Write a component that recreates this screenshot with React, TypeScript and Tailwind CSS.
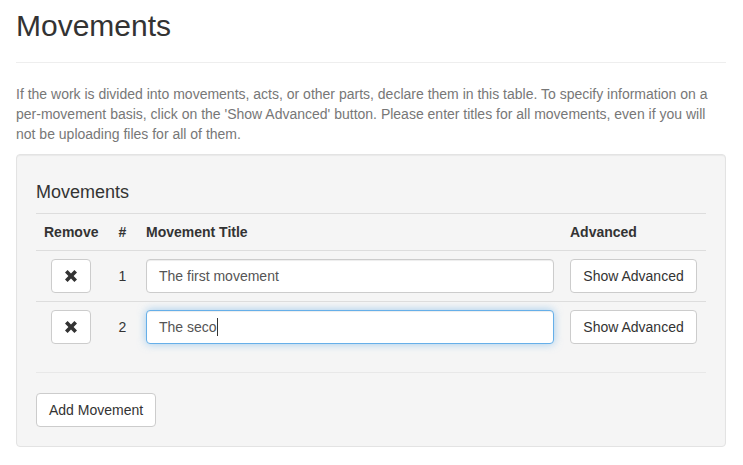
import React from 'react';

const RemoveIcon: React.FC = () => (
    <svg width="12" height="12" viewBox="0 0 12 12" className="block">
        <path d="M0 2.6 L2.6 0 L6 3.4 L9.4 0 L12 2.6 L8.6 6 L12 9.4 L9.4 12 L6 8.6 L2.6 12 L0 9.4 L3.4 6 Z" fill="#333" />
    </svg>
);

const movements = [
    { id: 1, title: 'The first movement', focused: false },
    { id: 2, title: 'The seco', focused: true },
];

const btn = 'h-[34px] bg-white border border-[#ccc] rounded-[4px] px-3 text-[14px] text-[#333] leading-5';

const App: React.FC = () => {
    return (
        <div className="min-h-screen bg-white pl-4 pr-[17px] text-[14px] leading-5 text-[#333]" style={{ fontFamily: '"Liberation Sans", Arial, sans-serif' }}>
            <div className="pt-[9px] pb-5 border-b border-[#eee]">
                <h2 className="text-[30px] leading-[33px] font-normal">Movements</h2>
            </div>

            <p className="mt-[21px] mb-[10px] text-[#777]">
                If the work is divided into movements, acts, or other parts, declare them in this table. To specify information on a per-movement basis, click on the 'Show Advanced' button. Please enter titles for all movements, even if you will not be uploading files for all of them.
            </p>

            <div className="bg-[#f5f5f5] border border-[#e3e3e3] rounded-[4px] p-[19px] shadow-[inset_0_1px_1px_rgba(0,0,0,0.05)]">
                <h4 className="mt-[9px] mb-[10px] text-[18px] leading-[19.8px] font-normal">Movements</h4>

                <table className="w-full border-collapse">
                    <thead>
                        <tr className="border-t border-[#ddd]">
                            <th className="w-[71px] p-2 text-left font-bold">Remove</th>
                            <th className="w-[31px] py-2 text-center font-bold">#</th>
                            <th className="p-2 text-left font-bold">Movement Title</th>
                            <th className="w-[144px] p-2 text-left font-bold">Advanced</th>
                        </tr>
                    </thead>
                    <tbody>
                        {movements.map(m => (
                            <tr key={m.id} className="border-t border-[#ddd]">
                                <td className="py-2 pl-[15px] pr-2 text-left">
                                    <button className="w-10 h-[34px] bg-white border border-[#ccc] rounded-[4px] inline-flex items-center justify-center align-middle">
                                        <RemoveIcon />
                                    </button>
                                </td>
                                <td className="py-2 text-center">{m.id}</td>
                                <td className="p-2">
                                    <div
                                        className={`h-[34px] bg-white rounded-[4px] px-3 flex items-center text-[#555] border ${m.focused
                                            ? 'border-[#66afe9] shadow-[inset_0_1px_1px_rgba(0,0,0,0.075),0_0_8px_rgba(102,175,233,0.6)]'
                                            : 'border-[#ccc] shadow-[inset_0_1px_1px_rgba(0,0,0,0.075)]'}`}
                                    >
                                        <span>{m.title}</span>
                                        {m.focused && <span className="w-px h-[18px] bg-[#333]"></span>}
                                    </div>
                                </td>
                                <td className="p-2">
                                    <button className={`${btn} w-[127px]`}>Show Advanced</button>
                                </td>
                            </tr>
                        ))}
                    </tbody>
                </table>

                <hr className="my-5 border-0 border-t border-[#e8e8e8]" />

                <button className={btn}>Add Movement</button>
            </div>
        </div>
    );
};

export default App;
